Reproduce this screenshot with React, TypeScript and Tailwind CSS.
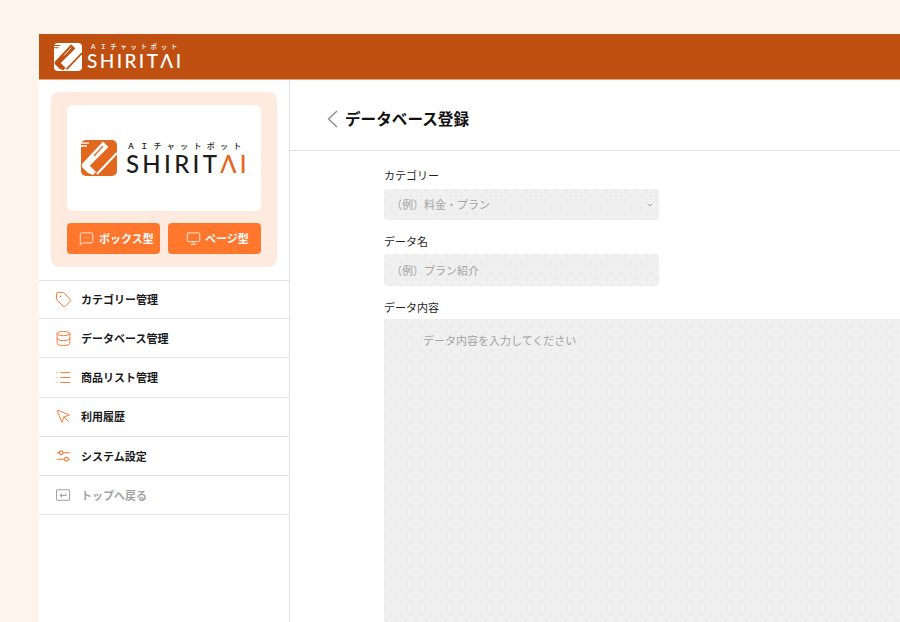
import { ChevronDown, Database, List, MessageSquareMore, Monitor, MousePointer, Tag } from 'lucide-react'
import type { ReactNode } from 'react'

const FONT = { fontFamily: '"Noto Sans CJK JP", "Noto Sans", sans-serif' }
const DOTS =
  'bg-[#f0f0f0] bg-[radial-gradient(#e8e8e8_0.6px,transparent_0.9px),radial-gradient(#e8e8e8_0.6px,transparent_0.9px)] bg-[length:10px_12px] bg-[position:2px_1px,7px_7px]'

function LogoMark({ className, fg, bg }: { className: string; fg: string; bg: string }) {
  return (
    <svg viewBox="0 0 36 36" className={className}>
      <rect width="36" height="36" rx="5" fill={bg} />
      <path d="M0 3.2H8M0 6H6" stroke={fg} strokeWidth="1.3" />
      <path d="M22 1.5 27.5 7 8 26.5 1 24 Z" fill={fg} />
      <path d="M1 24H7L15 32 12 35 7 33 1 27Z" fill={fg} />
      <path d="M22 6 13 16" stroke={bg} strokeWidth="1.2" />
      <path d="M36 13 16 34" stroke={fg} strokeWidth="2.2" />
    </svg>
  )
}

function Logo({ small }: { small?: boolean }) {
  if (small) {
    return (
      <div className="flex items-center gap-[5px]">
        <LogoMark className="h-[28px] w-[28px]" fg="#c05011" bg="#ffffff" />
        <div className="-mt-[1px] flex flex-col text-white">
          <span className="pl-[3px] text-[6.5px] font-medium leading-[9px] tracking-[3.6px]">ＡＩチャットボット</span>
          <span className="text-[19px] font-medium leading-[19px] tracking-[2.4px]" style={{ fontFamily: 'Lato, sans-serif' }}>
            SHIRITΛI
          </span>
        </div>
      </div>
    )
  }
  return (
    <div className="flex items-center gap-[9px] pl-[3px]">
      <LogoMark className="h-[36px] w-[36px]" fg="#ffffff" bg="#e2681f" />
      <div className="flex flex-col text-[#1c1c1c]">
        <span className="pl-[1px] text-[8px] font-medium leading-[11px] tracking-[5.3px]">ＡＩチャットボット</span>
        <span className="text-[24px] font-medium leading-[25px] tracking-[3.3px]" style={{ fontFamily: 'Lato, sans-serif' }}>
          SHIRIT<span className="text-[#e2681f]">ΛI</span>
        </span>
      </div>
    </div>
  )
}

function MenuRow({ icon, label, muted }: { icon: ReactNode; label: string; muted?: boolean }) {
  return (
    <div className={`flex h-[39.3px] items-center gap-[9px] border-b border-[#e3e3e3] pl-[16px] text-[11px] font-bold first:h-[38px] ${muted ? 'text-[#a3a3a3]' : 'text-[#1a1a1a]'}`}>
      <span className="flex w-[17px] justify-center">{icon}</span>
      {label}
    </div>
  )
}

const ICON = 'h-[19px] w-[19px] text-[#f97a37]'

function SlidersIcon() {
  return (
    <svg viewBox="0 0 16 14" className="h-[14px] w-[15px] text-[#f97a37]" fill="none" stroke="currentColor" strokeWidth="1.2">
      <path d="M1 3.5H3.5M7.5 3.5H15M1 10.5H9M13 10.5H15" />
      <circle cx="5.5" cy="3.5" r="2" />
      <circle cx="11" cy="10.5" r="2" />
    </svg>
  )
}

function ReturnIcon() {
  return (
    <svg viewBox="0 0 16 14" className="h-[14px] w-[15px] text-[#a3a3a3]" fill="none" stroke="currentColor" strokeWidth="1.1">
      <rect x="0.5" y="1.5" width="14" height="11" rx="0.8" />
      <path d="M10.5 5v2.5H4.5M6.5 5.5l-2 2 2 2" />
    </svg>
  )
}

export default function App() {
  return (
    <div className="h-[622px] overflow-hidden bg-[#fff5ec] pl-[39px] pt-[34px]" style={FONT}>
      <div className="flex h-[588px] flex-col bg-white">
        <header className="flex h-[46px] shrink-0 items-center border-b border-[#e8a67f] bg-[#c05011] pl-[15px]">
          <Logo small />
        </header>
        <div className="flex min-h-0 flex-1">
          <aside className="w-[251px] shrink-0 border-r border-[#e3e3e3]">
            <div className="px-[12px] pb-[13px] pt-[12px]">
              <div className="rounded-[8px] bg-[#ffeadf] px-[16px] pb-[13px] pt-[13px]">
                <div className="flex h-[106px] items-center justify-center rounded-[6px] bg-white">
                  <Logo />
                </div>
                <div className="mt-[12px] grid grid-cols-2 gap-[8px]">
                  <button className="flex h-[31px] items-center gap-[5px] rounded-[4px] bg-[#ff762d] pl-[12px] text-[11px] font-bold text-white">
                    <MessageSquareMore className="h-[15px] w-[15px]" strokeWidth={1.3} />
                    ボックス型
                  </button>
                  <button className="flex h-[31px] items-center gap-[4px] rounded-[4px] bg-[#ff762d] pl-[18px] text-[11px] font-bold text-white">
                    <Monitor className="h-[15px] w-[15px]" strokeWidth={1.3} />
                    ページ型
                  </button>
                </div>
              </div>
            </div>
            <nav className="border-t border-[#e3e3e3]">
              <MenuRow icon={<Tag className={ICON} strokeWidth={1.4} />} label="カテゴリー管理" />
              <MenuRow icon={<Database className={ICON} strokeWidth={1.4} />} label="データベース管理" />
              <MenuRow icon={<List className={ICON} strokeWidth={1.4} />} label="商品リスト管理" />
              <MenuRow icon={<MousePointer className={ICON} strokeWidth={1.4} />} label="利用履歴" />
              <MenuRow icon={<SlidersIcon />} label="システム設定" />
              <MenuRow icon={<ReturnIcon />} label="トップへ戻る" muted />
            </nav>
          </aside>
          <main className="min-w-0 flex-1">
            <div className="flex h-[71px] items-center gap-[7px] border-b border-[#e3e3e3] pl-[37px] pt-[8px]">
              <svg viewBox="0 0 11 18" className="h-[18px] w-[11px] text-[#8a8a8a]" fill="none" stroke="currentColor" strokeWidth="1.3">
                <path d="M10 1 1.5 9 10 17" />
              </svg>
              <h1 className="text-[15.6px] font-bold text-[#111111]">データベース登録</h1>
            </div>
            <div className="pl-[94px] pt-[16px] text-[11px] text-[#1f1f1f]">
              <label className="block leading-[16px]">カテゴリー</label>
              <div className={`mt-[6px] flex h-[31px] w-[275px] items-center justify-between rounded-[4px] pl-[7px] pr-[5px] text-[#a3a3a3] ${DOTS}`}>
                （例）料金・プラン
                <ChevronDown className="h-[8px] w-[8px] text-[#777777]" />
              </div>
              <label className="mt-[13px] block leading-[16px]">データ名</label>
              <div className={`mt-[5px] flex h-[32px] w-[275px] items-center rounded-[4px] pl-[7px] text-[#a3a3a3] ${DOTS}`}>
                （例）プラン紹介
              </div>
              <label className="mt-[13px] block leading-[16px]">データ内容</label>
              <div className={`mt-[4px] h-[400px] pl-[39px] pt-[13px] text-[#a3a3a3] ${DOTS}`}>
                データ内容を入力してください
              </div>
            </div>
          </main>
        </div>
      </div>
    </div>
  )
}
